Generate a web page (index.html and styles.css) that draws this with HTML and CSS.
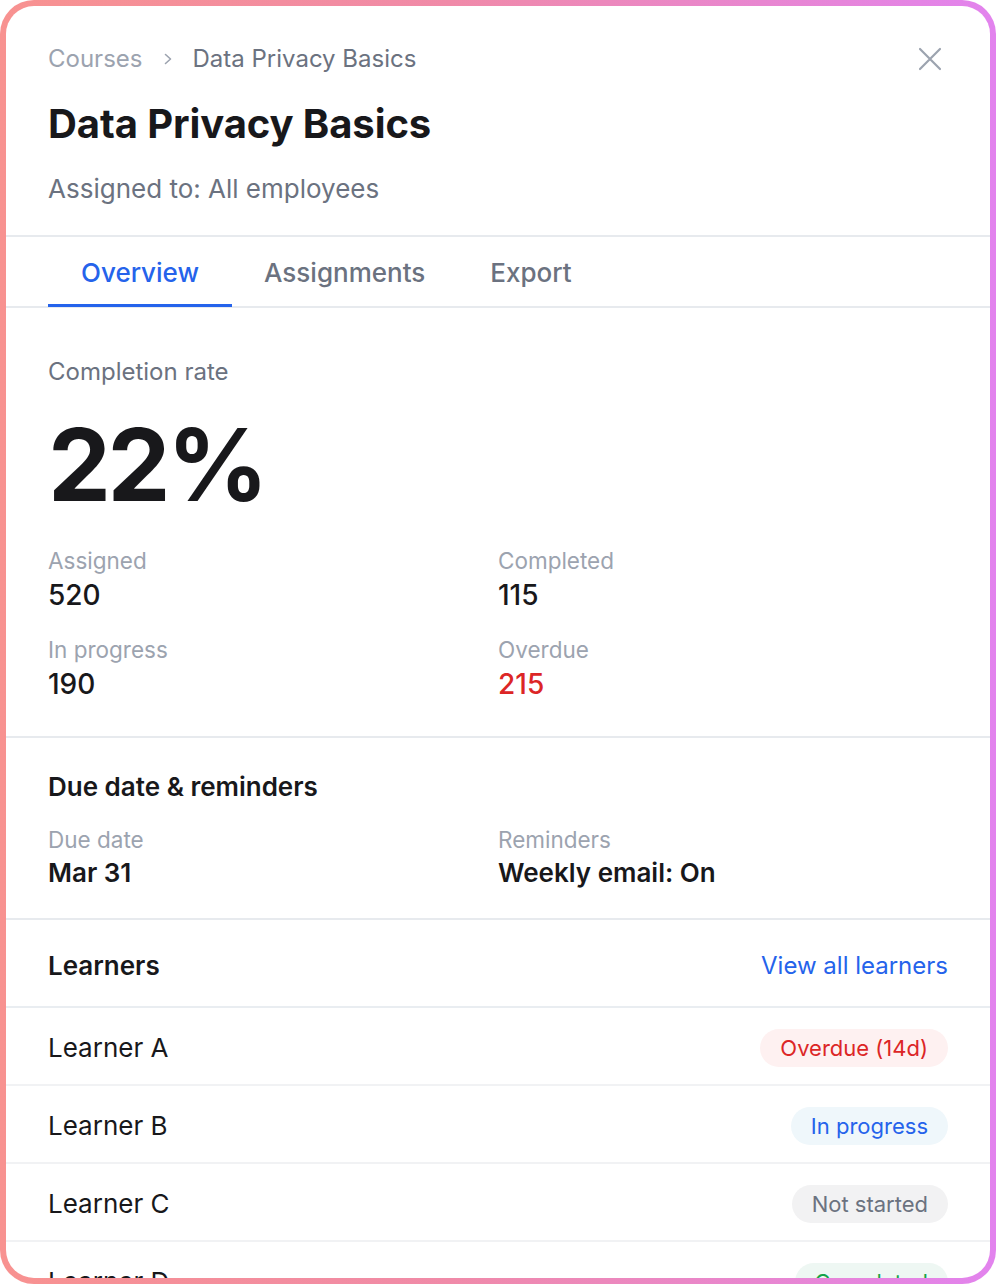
FILE: index.html
```html
<!DOCTYPE html>
<html lang="en">
<head>
<meta charset="utf-8">
<title>Data Privacy Basics</title>
<link rel="stylesheet" href="styles.css">
</head>
<body>
<div class="frame">
  <header class="head">
    <div class="crumb-row">
      <nav class="crumbs">
        <span class="crumb-root">Courses</span>
        <svg class="chev" width="12" height="14" viewBox="0 0 12 14"><path d="M3.5 2.5 L8.5 7 L3.5 11.5" fill="none" stroke="#9ca3af" stroke-width="1.6" stroke-linecap="round" stroke-linejoin="round"/></svg>
        <span class="crumb-cur">Data Privacy Basics</span>
      </nav>
      <svg class="close" width="24" height="24" viewBox="0 0 24 24"><path d="M2 2 L22 22 M22 2 L2 22" fill="none" stroke="#9ca3af" stroke-width="2.2" stroke-linecap="round"/></svg>
    </div>
    <h1 class="title">Data Privacy Basics</h1>
    <p class="sub">Assigned to: All employees</p>
  </header>

  <div class="tabs">
    <div class="tab active">Overview</div>
    <div class="tab">Assignments</div>
    <div class="tab">Export</div>
  </div>

  <section class="overview">
    <div class="muted-label">Completion rate</div>
    <div class="big">22%</div>
    <div class="stats">
      <div class="stat"><div class="s-label">Assigned</div><div class="s-val">520</div></div>
      <div class="stat"><div class="s-label">Completed</div><div class="s-val">115</div></div>
      <div class="stat"><div class="s-label">In progress</div><div class="s-val">190</div></div>
      <div class="stat"><div class="s-label">Overdue</div><div class="s-val red">215</div></div>
    </div>
  </section>

  <section class="due">
    <h2 class="sec-title">Due date &amp; reminders</h2>
    <div class="due-grid">
      <div class="stat"><div class="s-label">Due date</div><div class="d-val">Mar 31</div></div>
      <div class="stat"><div class="s-label">Reminders</div><div class="d-val">Weekly email: On</div></div>
    </div>
  </section>

  <div class="learners-head">
    <h2 class="sec-title">Learners</h2>
    <a class="link">View all learners</a>
  </div>

  <ul class="learners">
    <li class="row"><span class="name">Learner A</span><span class="badge b-over">Overdue (14d)</span></li>
    <li class="row"><span class="name">Learner B</span><span class="badge b-prog">In progress</span></li>
    <li class="row"><span class="name">Learner C</span><span class="badge b-not">Not started</span></li>
    <li class="row"><span class="name">Learner D</span><span class="badge b-done">Completed</span></li>
  </ul>
</div>
</body>
</html>
```

FILE: styles.css
```css
* { box-sizing: border-box; }
html, body { margin: 0; padding: 0; background: #ffffff; }
body {
  font-family: Inter, "Noto Sans", "Liberation Sans", sans-serif;
  color: #18181b;
}
.frame {
  width: 996px;
  height: 1284px;
  border: 6px solid transparent;
  border-radius: 34px;
  background:
    linear-gradient(#ffffff, #ffffff) padding-box,
    linear-gradient(90deg, #f89290 0%, #f08aa8 45%, #e283ee 100%) border-box;
  overflow: hidden;
}
.head { padding: 37px 42px 30px 42px; }
.crumb-row {
  display: flex;
  justify-content: space-between;
  align-items: center;
  height: 32px;
}
.crumbs {
  display: flex;
  align-items: center;
  font-size: 24px;
  line-height: 32px;
}
.crumb-root { color: #9ca3af; }
.chev { margin: 0 18px 0 20px; }
.crumb-cur { color: #6b7280; }
.close { margin-right: 6px; }
.title {
  margin: 25px 0 0 0;
  font-size: 40px;
  line-height: 48px;
  font-weight: 700;
  letter-spacing: -0.1px;
}
.sub {
  margin: 25px 0 0 0;
  font-size: 26px;
  line-height: 32px;
  color: #6b7280;
}
.tabs {
  display: flex;
  padding: 0 42px;
  border-top: 2px solid #e7eaee;
  border-bottom: 2px solid #e7eaee;
}
.tab {
  padding: 20px 33px 15px 33px;
  font-size: 26px;
  line-height: 32px;
  color: #6b7280;
  font-weight: 500;
  border-bottom: 3px solid transparent;
  margin-bottom: -1px;
}
.tab.active { color: #2563eb; border-bottom-color: #2563eb; }
.tab + .tab { margin-left: -1px; }

.overview { padding: 48px 42px 36px 42px; border-bottom: 2px solid #e7eaee; }
.muted-label { font-size: 24px; line-height: 32px; color: #6b7280; }
.big {
  margin-top: 27px;
  font-size: 100px;
  line-height: 100px;
  font-weight: 700;
  letter-spacing: -3.5px;
}
.stats {
  margin-top: 32px;
  display: grid;
  grid-template-columns: 1fr 1fr;
  row-gap: 25px;
}
.s-label { font-size: 22.5px; line-height: 28px; color: #9ca3af; }
.s-val { margin-top: 4px; font-size: 28px; line-height: 32px; font-weight: 500; }
.s-val.red { color: #dc2626; }

.due { padding: 33px 42px 29px 42px; border-bottom: 2px solid #e7eaee; }
.sec-title { margin: 0; font-size: 26px; line-height: 32px; font-weight: 600; }
.due-grid {
  margin-top: 23px;
  display: grid;
  grid-template-columns: 1fr 1fr;
}
.d-val { margin-top: 3px; font-size: 26px; line-height: 32px; font-weight: 600; }

.learners-head {
  display: flex;
  justify-content: space-between;
  align-items: center;
  padding: 30px 42px 24px 42px;
  border-bottom: 2px solid #e9edf1;
}
.link { color: #2563eb; font-size: 24px; line-height: 32px; }

.learners { list-style: none; margin: 0; padding: 0; }
.row {
  display: flex;
  justify-content: space-between;
  align-items: center;
  height: 78px;
  padding: 4px 42px 0 42px;
  border-bottom: 2px solid #f1f2f4;
}
.name { font-size: 26px; line-height: 32px; }
.badge {
  height: 38px;
  line-height: 38px;
  padding: 0 20px;
  border-radius: 19px;
  font-size: 22px;
}
.b-over { background: #fef1f1; color: #dc2626; }
.b-prog { background: #eff7fb; color: #2563eb; }
.b-not { background: #f2f2f3; color: #6b7280; }
.b-done { background: #eef7f3; color: #16a34a; }
```
